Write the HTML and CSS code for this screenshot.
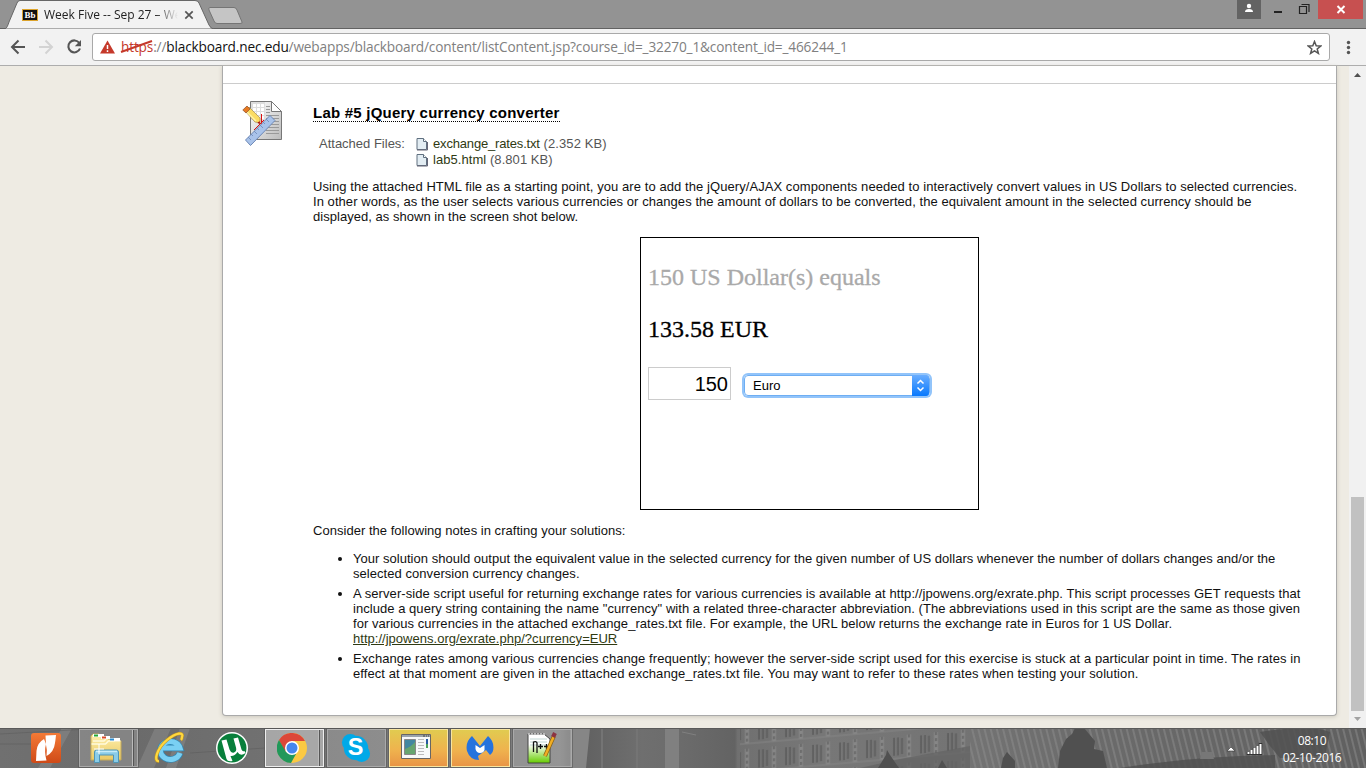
FILE: index.html
```html
<!DOCTYPE html>
<html lang="en">
<head>
<meta charset="utf-8">
<title>Week Five -- Sep 27</title>
<link rel="stylesheet" href="styles.css">
</head>
<body>
<header class="tabstrip">
  <svg class="tab-shapes" width="250" height="29" viewBox="0 0 250 29">
    <path d="M5 29C7 28 8 25 9 22L17 3Q18 .5 20 .5H195Q198 .5 199 3L209 25Q211 29 214 29Z" fill="#f2f2f2" stroke="#676767"/>
    <path d="M210 7.500H234Q236 7.500 237 10L242 22Q243 23.500 240 23.500H217Q215 23.500 214 21L209 10Q208 7.500 210 7.500Z" fill="#c5c5c5" stroke="#757575"/>
    <path d="M185.300 11.300l7.400 7.400m0-7.400l-7.400 7.400" stroke="#555" stroke-width="1.700"/>
  </svg>
  <div class="tab"><span class="favicon">Bb</span><span class="tab-title">Week Five -- Sep 27 – We</span></div>
  <div class="window-controls">
    <span class="user"><svg width="24" height="19"><circle cx="12" cy="6" r="2.200" fill="#fff"/><path d="M8 12q0-3 4-3t4 3z" fill="#fff"/></svg></span>
    <svg width="57" height="19" viewBox="0 0 57 19"><path d="M13 11h8v2h-8z" fill="#222"/><path d="M38.500 6.500h7v7h-7zM38 6.500h8M40.500 4.500h7.500v7.500" fill="none" stroke="#222" stroke-width="1.200"/></svg>
    <span class="close"><svg width="45" height="19"><path d="M19.500 6l7 7m0-7l-7 7" stroke="#fff" stroke-width="2"/></svg></span>
  </div>
</header>
<nav class="toolbar">
  <svg class="nav-icons" width="92" height="36" viewBox="0 0 92 36" fill="none" stroke-width="2">
    <path d="M25 18H12.500m6-6.500L12 18l6.500 6.500" stroke="#555"/>
    <path d="M39 18h12.500m-6-6.500L52 18l-6.500 6.500" stroke="#d3d3d3"/>
    <path d="M79.300 14A6 6 0 1 0 80 19.500" stroke="#555" stroke-width="2.100"/><path d="M81 11v6.200h-6.200z" fill="#555"/>
  </svg>
  <div class="address">
    <svg class="warn" width="15" height="14" viewBox="0 0 15 14"><path d="M7.500.5L15 13.500H0z" fill="#c5392b"/><path d="M7.500 5v4m0 1.200v1.700" stroke="#fff" stroke-width="1.500"/></svg>
    <span class="url"><span class="scheme">https<svg class="strike" width="34" height="14"><path d="M1 12L32 1" stroke="#c5392b" stroke-width="2"/></svg></span>://<b>blackboard.nec.edu</b>/webapps/blackboard/content/listContent.jsp?course_id=_32270_1&amp;content_id=_466244_1</span>
    <svg class="star" width="15" height="15" viewBox="0 0 15 15"><path d="M7.500 1.500l1.700 4.200 4.500.3-3.500 2.900 1.200 4.500-3.900-2.500-3.900 2.500 1.200-4.500L1.300 6l4.500-.3z" fill="none" stroke="#555" stroke-width="1.500"/></svg>
  </div>
  <svg class="menu" width="36" height="36"><g fill="#555"><circle cx="18.500" cy="13.500" r="1.700"/><circle cx="18.500" cy="18.500" r="1.700"/><circle cx="18.500" cy="23.500" r="1.700"/></g></svg>
</nav>
<main class="viewport">
  <section class="panel">
    <div class="divider"></div>
    <article class="item">
      <svg class="lab-icon" width="42" height="47" viewBox="0 0 42 47">
        <defs><linearGradient id="paper" x1="0" y1="0" x2="1" y2="1"><stop stop-color="#fff"/><stop offset="1" stop-color="#bbb"/></linearGradient></defs>
        <path d="M8.500 1.500h21l10 10v28h-31z" fill="url(#paper)" stroke="#777"/><path d="M29.500 1.500v10h10z" fill="#fff" stroke="#777"/>
        <path d="M9 2h14v18H9z" fill="#ddd"/><path d="M11 5.500h12M11 9.500h12M11 13.500h12M12.500 4v15M16.500 4v15M20.500 4v15" stroke="#fff" stroke-width="2.500" stroke-dasharray="3 1"/>
        <path d="M24 6.500h4M24 9.500h4M24 12.500h4M24 15.500h13M24 18.500h13M24 21.500h13M24 24.500h13M24 27.500h13M24 30.500h13M24 33.500h13" stroke="#999"/>
        <path d="M19.500 14v12M12 30l10-10" stroke="#d11"/>
        <path d="M3 11l4-4 11 11v5l-5-1z" fill="#fbdc63" stroke="#a8894f" stroke-width=".7"/><path d="M5 12l9 9" stroke="#fff3a5" stroke-width="1.500"/><path d="M.800 10L5 6l3 3-4 4z" fill="#e77a22" stroke="#975a33" stroke-width=".8"/><path d="M15.500 23l2.500 1-.5-3" fill="#a00"/>
        <path d="M3.500 40L28 15.500l5 5L8.500 45.500z" fill="#a9c3ea" stroke="#6d88b6"/><path d="M6 37l3 3m0-6l2 2m1-5l3 3m0-6l2 2m1-5l3 3m0-6l2 2m1-5l3 3" stroke="#6d88b6" stroke-width=".8"/>
      </svg>
      <div class="body">
        <h3 class="title"><span>Lab #5 jQuery currency converter</span></h3>
        <div class="files">
          <span class="label">Attached Files:</span>
          <div class="file-list">
            <div class="file"><svg width="12" height="14" viewBox="0 0 12 14"><path d="M1 1.500h6.500l3 3v8H1z" fill="#e3edf3" stroke="#607080"/><path d="M7.500 1.500v3h3" fill="#fff" stroke="#607080"/><path d="M1 13h10.500V5" fill="none" stroke="#667"/></svg><span class="f1"><a>exchange_rates.txt</a> (2.352 KB)</span></div>
            <div class="file"><svg width="12" height="14" viewBox="0 0 12 14"><path d="M1 1.500h6.500l3 3v8H1z" fill="#e3edf3" stroke="#607080"/><path d="M7.500 1.500v3h3" fill="#fff" stroke="#607080"/><path d="M1 13h10.500V5" fill="none" stroke="#667"/></svg><span class="f2"><a>lab5.html</a> (8.801 KB)</span></div>
          </div>
        </div>
        <p class="intro"><span class="line l1">Using the attached HTML file as a starting point, you are to add the jQuery/AJAX components needed to interactively convert values in US Dollars to selected currencies.</span><span class="line l2">In other words, as the user selects various currencies or changes the amount of dollars to be converted, the equivalent amount in the selected currency should be</span><span class="line l3">displayed, as shown in the screen shot below.</span></p>
        <div class="demo">
          <div class="equals">150 US Dollar(s) equals</div>
          <div class="result">133.58 EUR</div>
          <div class="controls"><div class="amount">150</div><div class="select"><span>Euro</span><i class="stepper"><svg width="17" height="21"><path d="M5.500 8.500l3-3 3 3m0 4l-3 3-3-3" fill="none" stroke="#fff" stroke-width="1.500"/></svg></i></div></div>
        </div>
        <p class="consider"><span class="line l4">Consider the following notes in crafting your solutions:</span></p>
        <ul class="notes">
          <li><span class="line l5">Your solution should output the equivalent value in the selected currency for the given number of US dollars whenever the number of dollars changes and/or the</span><span class="line l6">selected conversion currency changes.</span></li>
          <li><span class="line l7">A server-side script useful for returning exchange rates for various currencies is available at http://jpowens.org/exrate.php. This script processes GET requests that</span><span class="line l8">include a query string containing the name "currency" with a related three-character abbreviation. (The abbreviations used in this script are the same as those given</span><span class="line l9">for various currencies in the attached exchange_rates.txt file. For example, the URL below returns the exchange rate in Euros for 1 US Dollar.</span><span class="line l10"><a class="link">http://jpowens.org/exrate.php/?currency=EUR</a></span></li>
          <li><span class="line l11">Exchange rates among various currencies change frequently; however the server-side script used for this exercise is stuck at a particular point in time. The rates in</span><span class="line l12">effect at that moment are given in the attached exchange_rates.txt file. You may want to refer to these rates when testing your solution.</span></li>
        </ul>
      </div>
    </article>
  </section>
  <aside class="scrollbar"><svg width="17" height="17"><path d="M5 11h7L8.500 7z" fill="#505050"/></svg><div class="thumb"></div><svg width="17" height="17"><path d="M5 6h7l-3.500 4z" fill="#a3a3a3"/></svg></aside>
</main>
<footer class="taskbar">
  <svg class="wallpaper" width="1366" height="40" viewBox="0 0 1366 40">
    <defs>
      <linearGradient id="base"><stop stop-color="#707070"/><stop offset=".1" stop-color="#6b6b6b"/><stop offset=".3" stop-color="#777"/><stop offset=".41" stop-color="#808080"/><stop offset=".43" stop-color="#626262"/><stop offset=".47" stop-color="#6f6f6f"/><stop offset=".5" stop-color="#6b6b6b"/><stop offset=".538" stop-color="#636363"/><stop offset=".54" stop-color="#707070"/><stop offset=".6" stop-color="#777"/><stop offset=".7" stop-color="#747474"/><stop offset=".8" stop-color="#6b6b6b"/><stop offset="1" stop-color="#606060"/></linearGradient>
      <pattern id="windows" width="27" height="28" patternUnits="userSpaceOnUse" patternTransform="skewY(-5)"><path d="M3 4v18M7 4v18M11 5v16" stroke="#565656" stroke-width="1.600"/><path d="M18 2v23" stroke="#8b8b8b" stroke-width="4"/><path d="M18 2v23" stroke="#5d5d5d" stroke-width="1.500" stroke-dasharray="3 3"/><path d="M0 25h27" stroke="#888"/></pattern>
      <pattern id="roof" width="6" height="6" patternUnits="userSpaceOnUse" patternTransform="rotate(-14)"><path d="M1 0v6" stroke="#8e8e8e" stroke-width="1.300"/></pattern>
    </defs>
    <path d="M0 0h1366v40H0z" fill="url(#base)"/>
    <path d="M62 0h10L50 40H38zM155 0h16l-17 40h-17zM180 0h10l-14 40h-10z" fill="#8b8b8b" opacity=".55"/>
    <path d="M0 16h50M0 6l90-5M190 25l75-5" stroke="#555" opacity=".4"/>
    <path d="M570 0h20l-4 40h-16z" fill="#868686"/><path d="M665 0h14v40h-14z" fill="#808080"/><path d="M602 0v40M637 0v40" stroke="#747474" stroke-width="2"/>
    <path d="M682 4l14 3" stroke="#808080" fill="none"/>
    <path d="M740 0h230v40H740z" fill="url(#windows)" opacity=".8"/><path d="M860 40l40-9 70-13v22z" fill="#646464" opacity=".75"/><path d="M878 40l8-13 1-5 3 5 9 13zM938 40l4-8 5 8z" fill="#505050"/>
    <path d="M970 0h396v40H970z" fill="url(#roof)" opacity=".75"/>
    <path d="M1058 40l2-17 6-12 6-5 3-6h9l11 13-1 8 9 2 4 17zM1001 40l2-10 4-6 8 9v7z" fill="#505050"/>
    <path d="M1120 40q75-12 155-13v13zM1260 4q50-8 70 0l-5 24-45 2-10-12z" fill="#515151" opacity=".85"/><path d="M1202 24h10l2 7h-14z" fill="#777"/>
    <path d="M0 .5h1366" stroke="#5a5a5a"/>
  </svg>
  <div class="tasks">
    <div class="task"><svg width="32" height="32" viewBox="0 0 32 32"><defs><linearGradient id="nitro" x2="0" y2="1"><stop stop-color="#f47a36"/><stop offset="1" stop-color="#cf4a18"/></linearGradient></defs><rect x="1" y="1" width="30" height="30" rx="3" fill="url(#nitro)"/><path d="M15.500 3.500L26 3q-.5 5-1 8-1 9-8.500 13 1-6-.5-11z" fill="#fff"/><path d="M14 7q-7 4-7.500 12L6 29l10.500-.5Q14 19 16 12z" fill="#fff"/></svg></div>
    <div class="task open stacked"><svg width="32" height="32" viewBox="0 0 32 32"><defs><linearGradient id="folder" x2="0" y2="1"><stop stop-color="#fff0ad"/><stop offset="1" stop-color="#e9c965"/></linearGradient></defs><path d="M1 28V4l2-2h6l2 3h5l2 2h5l2 2h6v19z" fill="url(#folder)" stroke="#c5aa59"/><path d="M3 9h11l2-2M1.500 12h14l3-3h12" stroke="#fffadb" fill="none" stroke-width="1.500"/><path d="M3 3.500h11M11 5.500h9M20 7.500h10" stroke="#fff" stroke-width="3"/><path d="M4 3.500h4" stroke="#25a832" stroke-width="2"/><path d="M12 5.500h4" stroke="#dc4b26" stroke-width="2"/><path d="M20 7.500h4" stroke="#298bd0" stroke-width="2"/><path d="M4.500 30.500V20q0-2 2-2h20q2 0 2 2v10.500h-5V23h-14v7.500z" fill="#8acce8" stroke="#5095b4"/><path d="M6 19.500h21" stroke="#c5ecfa" stroke-width="1.500"/><path d="M4 17h10M9 12v10" stroke="#fff"/></svg></div>
    <div class="task"><svg width="32" height="32" viewBox="0 0 32 32"><g fill="none"><path d="M26 21a10 9 0 1 1 0-5H9" stroke="#3287b3" stroke-width="6.500"/><path d="M26 21a10 9 0 1 1 0-5H9" stroke="#7ad0f3" stroke-width="5"/><path d="M5 29C-1 30 3 16 13 8S30 0 28 5q0 2-1 3" stroke="#c99b1e" stroke-width="3.200"/><path d="M5 29C-1 30 3 16 13 8S30 0 28 5q0 2-1 3" stroke="#ffd83f" stroke-width="2.200"/></g></svg></div>
    <div class="task"><svg width="32" height="32" viewBox="0 0 32 32"><circle cx="16" cy="16" r="16" fill="#fff"/><circle cx="16" cy="16" r="14.500" fill="#087f3b"/><path d="M5.500 8.500l5-1 3 10q1.500 4 4.500 3t2-5l-2.500-9 4.500-1 3.500 12q1 2.500 3 1.500l1 2q-5 4-8-1-3 4.500-7 4l2 5q-5 1-6-2z" fill="#fff"/></svg></div>
    <div class="task open active stacked"><svg width="30" height="30" viewBox="0 0 30 30"><circle cx="15" cy="15" r="15" fill="#fbc943"/><path d="M2 7A15 15 0 0 1 28 8H15l-7 11z" fill="#dc4739"/><path d="M2 7l7 12 10 2-5 9A15 15 0 0 1 2 7z" fill="#21985a"/><circle cx="15" cy="15" r="7" fill="#fff"/><circle cx="15" cy="15" r="5.500" fill="#4586ed"/></svg></div>
    <div class="task open"><svg width="30" height="32" viewBox="0 0 32 32"><g fill="#00a9e8"><circle cx="16" cy="16" r="13"/><circle cx="10" cy="10" r="9"/><circle cx="22" cy="22" r="9"/></g><text class="skype-s" x="15.500" y="23.500">S</text></svg></div>
    <div class="task open alert"><svg class="raise" width="30" height="26" viewBox="0 0 30 26"><path d="M.5.500h29v24H.5z" fill="#f7f9f9" stroke="#666"/><path d="M1 1h28v2H1z" fill="#9aa3aa"/><path d="M22 2h2m1 0h1m1 0h1" stroke="#444"/><path d="M3.500 5.500h11v15h-11z" fill="#4387a0" stroke="#888"/><path d="M4 15q6-2 10-7v12H4z" fill="#66a56f"/><path d="M17 5.500h6m-6 3h6m-6 3h6m-6 3h6m-6 3h6m-6 3h6" stroke="#bbb"/><path d="M25 5h2v5h-2z" fill="#2559a0"/><path d="M25 10h2v4h-2z" fill="#4da25b"/></svg></div>
    <div class="task open alert"><svg width="28" height="26" viewBox="0 0 28 26"><path d="M6 1l8 10 8-10q7 6 5 15-.5 2-3 4l-4-5-8 6 1 4Q4 25 1 16-1 7 6 1z" fill="#2673dd"/><path d="M9.500 10l4.500 3 4.500-3v5q-1 3-4.500 3T9.500 14z" fill="#fff"/></svg></div>
    <div class="task open"><svg class="notepad" width="32" height="32" viewBox="0 0 32 32"><defs><linearGradient id="npp" x2="0" y2="1"><stop offset=".35" stop-color="#fff"/><stop offset="1" stop-color="#66cd00"/></linearGradient></defs><path d="M2 2h16l6 5v24H2z" fill="url(#npp)" stroke="#444"/><path d="M2 2h18" stroke="#bbb" stroke-width="2" stroke-dasharray="2 1"/><path d="M4 7h17m-17 3h17m-17 3h17" stroke="#c0d5d2"/><path d="M7.500 20V10q3-1 3.500 1v10M12 14.500h5m-2.500-2.500v5m3.500-2.500h5m-2.500-2.500v5" fill="none" stroke="#111" stroke-width="1.300"/><path d="M28 4L19 24" stroke="#896015" stroke-width="4"/><path d="M28 4L19 24" stroke="#f1ae23" stroke-width="2.500"/><path d="M29 1l-2 4" stroke="#8c3342" stroke-width="4"/></svg></div>
  </div>
  <div class="tray"><svg width="42" height="16" viewBox="0 0 42 16"><path d="M3 10h8L7 6z" fill="#fff" stroke="#333" stroke-width=".6"/><path d="M24.500 14v-3m3 3V9m3 5V7m3 7V5m3 9V2" stroke="#333" stroke-width="3.500"/><path d="M24.500 13v-2m3 2V9m3 4V7m3 6V5m3 8V3" stroke="#fff" stroke-width="2"/></svg><div class="clock">08:10<br>02-10-2016</div></div>
</footer>
</body>
</html>
```

FILE: styles.css
```css
* { box-sizing: border-box; }
body { margin: 0; width: 1366px; height: 768px; overflow: hidden; display: flex; flex-direction: column; font-family: "Liberation Sans", Arial, sans-serif; font-size: 13px; color: #111; }
svg { display: block; flex: none; }

/* Browser frame */
.tabstrip { position: relative; height: 29px; flex: none; background: #939393; border-bottom: 1px solid #626262; display: flex; justify-content: space-between; }
.tab-shapes { position: absolute; left: 0; top: 0; }
.tab { position: relative; display: flex; align-items: center; padding: 1px 0 0 22px; height: 29px; }
.favicon { width: 16px; height: 12px; background: #111; border: 1px solid #dda42c; color: #fff; font: bold 9px/10px "Liberation Serif", serif; text-align: center; }
.tab-title { margin-left: 6px; width: 134px; overflow: hidden; white-space: nowrap; font: 12px/16px "Open Sans", sans-serif; color: #222; -webkit-mask-image: linear-gradient(to right, #000 112px, transparent 134px); }
.window-controls { display: flex; height: 19px; padding-right: 3px; }
.user { width: 24px; background: #636363; }
.close { width: 45px; background: #c75050; }
.toolbar { height: 37px; flex: none; background: #f2f2f2; border-bottom: 1px solid #adadad; display: flex; }
.address { margin-top: 4px; width: 1238px; height: 28px; background: #fff; border: 1px solid #a9a9a9; border-radius: 3px; display: flex; align-items: center; padding: 0 7px; }
.url { flex: 1; margin-left: 6px; white-space: nowrap; font: 13.65px/20px "Open Sans", sans-serif; letter-spacing: -.16px; color: #808080; }
.url b { font-weight: 400; color: #111; }
.scheme { position: relative; color: #c5392b; }
.strike { position: absolute; left: -1px; top: 3px; }

/* Course page */
.viewport { height: 662px; flex: none; background: #eeebe3; display: flex; justify-content: flex-end; }
.panel { width: 1115px; height: 650px; background: #fff; border: 1px solid #aaa; border-top: 0; border-radius: 0 0 4px 4px; box-shadow: 0 1px 4px #cbc8bd; margin-right: 12px; }
.divider { height: 18px; border-bottom: 1px solid #ccc; }
.item { display: flex; padding: 16px 0 0 19px; }
.lab-icon { margin-right: 29px; }
.title { margin: 3px 0 0; height: 20px; font-size: 15px; line-height: 20px; white-space: nowrap; color: #000; }
.title span { border-bottom: 1px dotted #000; letter-spacing: .23px; }
.files { display: flex; margin: 13px 0 0 6px; line-height: 16px; color: #555; height: 32px; }
.label { width: 97px; }
.file { display: flex; align-items: center; gap: 5px; height: 16px; white-space: nowrap; }
.file a { color: #2f3a12; }
.f1 a { letter-spacing: -.17px; }
.f1 { letter-spacing: .1px; }
.f2 { letter-spacing: .06px; }
.intro, .consider { margin: 11px 0 0; line-height: 15px; }
.line { display: block; white-space: nowrap; width: max-content; }
.l1 { letter-spacing: .072px; }
.l2 { letter-spacing: .057px; }
.l3 { letter-spacing: .03px; }
.l4 { letter-spacing: .03px; }
.l5 { letter-spacing: .027px; }
.l6 { letter-spacing: .05px; }
.l7 { letter-spacing: .078px; }
.l8 { letter-spacing: .043px; }
.l9 { letter-spacing: .042px; }
.l10 { letter-spacing: .02px; }
.l11 { letter-spacing: .073px; }
.l12 { letter-spacing: .08px; }
.demo { width: 339px; height: 273px; margin: 13px 0 0 327px; border: 1px solid #000; padding: 23px 7px; }
.equals, .result { font: 24px/32px "Liberation Serif", serif; color: #a9a9a9; white-space: nowrap; -webkit-text-stroke: .3px currentColor; }
.result { color: #000; margin-top: 20px; }
.controls { display: flex; margin-top: 22px; align-items: center; }
.amount { width: 83px; height: 33px; border: 1px solid #ccc; font-size: 20px; line-height: 32px; text-align: right; padding-right: 2px; color: #000; }
.select { margin: 3px 0 0 13px; width: 186px; height: 21px; border-radius: 4px; border: 1px solid #6eaef3; box-shadow: 0 0 0 2px #92c4fa; display: flex; align-items: center; justify-content: space-between; padding-left: 8px; color: #000; }
.stepper { width: 17px; height: 21px; background: linear-gradient(#69adff, #0879fd); border-radius: 0 3px 3px 0; }
.consider { margin-top: 13px; }
.notes { margin: 13px 0 0; padding: 0 0 0 40px; line-height: 15px; }
.notes li { margin-bottom: 5px; }
.link { color: #2f3a12; text-decoration: underline; }
.scrollbar { width: 17px; background: #f1f1f1; display: flex; flex-direction: column; }
.thumb { width: 13px; height: 214px; margin: auto 2px 0; background: #c1c1c1; }

/* Desktop taskbar */
.taskbar { position: relative; height: 40px; flex: none; display: flex; justify-content: space-between; background: #6b6b6b; }
.wallpaper { position: absolute; left: 0; top: 0; }
.tasks { position: relative; display: flex; gap: 3px; padding: 1px 0 0 17px; }
.task { width: 59px; height: 38px; display: flex; align-items: center; justify-content: center; padding-right: 2px; }
.open { border: 1px solid #aaa; outline: 1px solid #5558; background: #ffffff2b; }
.stacked { position: relative; padding-right: 6px; }
.stacked::after { content: ""; position: absolute; right: 3px; top: 0; height: 36px; border-left: 1px solid #bbb; border-right: 1px solid #555; }
.active { background: #ffffff60; border-color: #eee; }
.alert { background: linear-gradient(#e1cb50, #efb34e 55%, #e99546); border-color: #f8e5a0; }
.raise { margin: 0 3px 2px 0; }
.notepad { margin-right: 0; }
.skype-s { font: bold 25px "Liberation Sans", sans-serif; fill: #fff; text-anchor: middle; }
.tray { position: relative; display: flex; width: 142px; padding-top: 13px; color: #fff; }
.clock { margin: -9px 0 0 13px; width: 66px; font: 12px/17px "Open Sans", sans-serif; letter-spacing: -.4px; text-align: center; white-space: nowrap; }
```
